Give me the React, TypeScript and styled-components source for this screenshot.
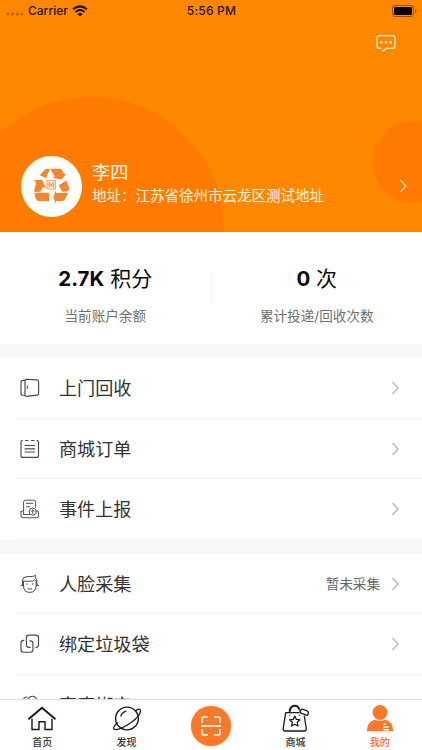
import React from 'react';
import styled, { createGlobalStyle } from 'styled-components';

const Global = createGlobalStyle`
  * { box-sizing: border-box; }
  html, body { margin: 0; padding: 0; }
  body {
    width: 422px;
    height: 750px;
    overflow: hidden;
    background: #fff;
    font-family: Inter, 'Noto Sans CJK SC', sans-serif;
    color: #333;
  }
  svg { display: block; flex: none; }
`;

const Screen = styled.div`
  width: 422px;
  height: 750px;
  display: flex;
  flex-direction: column;
  overflow: hidden;
`;

const Scroller = styled.main`
  flex: 1;
  min-height: 0;
  overflow: hidden;
  display: flex;
  flex-direction: column;
`;

const Header = styled.header`
  flex: none;
  height: 232px;
  background: #ff8800;
  position: relative;
  overflow: hidden;
  display: flex;
  flex-direction: column;
`;

const Bubble = styled.div<{ $x: number; $y: number; $r: number }>`
  position: absolute;
  left: ${p => p.$x - p.$r}px;
  top: ${p => p.$y - p.$r}px;
  width: ${p => p.$r * 2}px;
  height: ${p => p.$r * 2}px;
  border-radius: 50%;
  background: #ff7b00;
`;

const StatusBar = styled.div`
  position: relative;
  height: 21px;
  padding: 0 5px 0 6px;
  display: grid;
  grid-template-columns: 1fr auto 1fr;
  align-items: center;
  font-size: 12px;
  font-weight: 500;
  letter-spacing: 0.2px;
  color: #241300;
`;

const Carrier = styled.div`
  display: flex;
  align-items: center;
  gap: 4.5px;
  letter-spacing: 0;
`;

const SignalDots = styled.svg`
  margin-top: 7px;
`;

const Battery = styled.div`
  display: flex;
  justify-content: flex-end;
`;

const HeaderActions = styled.div`
  position: relative;
  display: flex;
  justify-content: flex-end;
  padding: 12.5px 26px 0 0;
`;

const Profile = styled.div`
  position: relative;
  display: flex;
  align-items: center;
  margin-top: auto;
  height: 62px;
  margin-bottom: 15px;
  padding: 0 13px 0 20.5px;
`;

const Avatar = styled.div`
  width: 61px;
  height: 61px;
  border-radius: 50%;
  background: #fff;
  display: flex;
  align-items: center;
  justify-content: center;
`;

const Person = styled.div`
  flex: 1;
  margin-left: 10.5px;
  color: #fff6e6;
`;

const Name = styled.div`
  font-size: 18.2px;
  line-height: 26px;
  margin-top: -6px;
`;

const Address = styled.div`
  font-size: 14.5px;
  line-height: 22px;
  white-space: nowrap;
`;

const Stats = styled.section`
  flex: none;
  height: 112px;
  display: flex;
  align-items: flex-start;
  background: #fff;
`;

const Stat = styled.div`
  flex: 1;
  padding-top: 32px;
  text-align: center;
`;

const StatDivider = styled.div`
  width: 1px;
  height: 32px;
  margin-top: 40px;
  background: #f4f4f4;
`;

const StatValue = styled.div`
  font-size: 21px;
  line-height: 30px;
  color: #0a0a0a;
  b { font-weight: 700; font-size: 20.5px; }
`;

const StatLabel = styled.div`
  margin-top: 12px;
  font-size: 13.6px;
  line-height: 20px;
  color: #707070;
`;

const Gap = styled.div`
  flex: none;
  height: 14px;
  background: #f8f7f6;
`;

const Group = styled.section`
  flex: none;
  background: #fff;
`;

const Row = styled.div`
  height: 60.5px;
  display: flex;
  align-items: center;
  padding: 0 21px 0 20px;
  background: linear-gradient(#f5f5f5, #f5f5f5) 16px 100% / 100% 1px no-repeat;
`;

const RowTitle = styled.div`
  flex: 1;
  margin-left: 19px;
  font-size: 18.1px;
  line-height: 26px;
  color: #333;
`;

const RowNote = styled.div`
  font-size: 13.6px;
  line-height: 20px;
  color: #666;
  margin-right: 9px;
`;

const TabBar = styled.nav`
  flex: none;
  height: 51px;
  border-top: 1px solid #dedede;
  background: #fff;
  display: grid;
  grid-template-columns: repeat(5, 1fr);
`;

const Tab = styled.div<{ $active?: boolean }>`
  display: flex;
  flex-direction: column;
  align-items: center;
  padding-top: 4px;
  font-size: 10px;
  line-height: 14px;
  font-weight: 500;
  color: ${p => (p.$active ? '#f9663b' : '#333')};
`;

const TabLabel = styled.span`
  margin-top: 1px;
`;

const ScanButton = styled.div`
  width: 40px;
  height: 40px;
  margin-top: 2px;
  border-radius: 50%;
  background: #fb7829;
  box-shadow: 0 0 2px rgba(251, 120, 41, 0.5);
  display: flex;
  align-items: center;
  justify-content: center;
`;

const Chevron = ({ color = '#c0c0c2', width = 1.7 }: { color?: string; width?: number }) => (
  <svg width="12" height="14" viewBox="0 0 12 14" fill="none" stroke={color} strokeWidth={width}>
    <path d="M3.5 1.2 9 7 3.5 12.8" />
  </svg>
);

const LineIcon = ({ children }: { children: React.ReactNode }) => (
  <svg width="20" height="20" viewBox="0 0 20 20" fill="none" stroke="#484848" strokeWidth="1.15" strokeLinecap="round" strokeLinejoin="round">
    {children}
  </svg>
);

const DoorIcon = () => (
  <LineIcon>
    <path d="M6.4 1.2 16.9 1.9Q18.6 2.1 18.6 3.6V15.4Q18.6 17 17 17.1L6.4 18.4Q5 18.5 5 17V2.6Q5 1.2 6.4 1.2" />
    <path d="M4.8 2.4H3Q1 2.4 1 4.4V15.4Q1 17.2 3 17.2H4.8M7.4 8.3V10.2" />
  </LineIcon>
);

const OrderIcon = () => (
  <LineIcon>
    <path d="M2.5 1.5Q1 1.5 1 3.4V16.4Q1 18.4 3 18.4H16.5Q18.5 18.4 18.5 16.4V3.4Q18.5 1.5 17 1.5M5.4 1.5H8M11.4 1.5H14M5 6.5H14.6M5 9.8H14.6M5 13H14.6" />
  </LineIcon>
);

const ReportIcon = () => (
  <LineIcon>
    <g strokeWidth="0.95">
      <path d="M3.6 15.3V3Q3.6 1.2 5.4 1.2H13.8Q15.6 1.2 15.6 3V8.4M6.3 4.3H13M6.3 7.7H9.8M1 12.7V17Q1 18.7 2.8 18.7H16.7Q18.5 18.7 18.5 17V12.7L16.8 11.8M1 12.7 3.5 11.5M3.8 15.5H10" />
      <circle cx="12.8" cy="12.6" r="3.6" />
      <path d="M12.8 14.6V11M11.4 12.2 12.8 10.8 14.2 12.2" />
    </g>
  </LineIcon>
);

const FaceIcon = () => (
  <LineIcon>
    <g strokeWidth="1">
      <path d="M2.6 11.5V6.4Q2.6 3 6 2.8L12.6 2.4Q14.6 2.2 15.6 1.1Q16 2.8 15.3 4Q16.9 5 16.9 7V11.5" />
      <path d="M2.8 7.2H12.8L14.4 5.7 16.6 7.6M1 11.3H3.4M16.2 11.3H18.6M3.5 8V12Q3.7 18.4 9.8 18.4Q15.9 18.4 16.1 12V8" />
      <path d="M8 14.8Q9.8 15.7 11.6 14.8" />
      <path d="M7 9.9V10M12.7 9.9V10" strokeWidth="1.5" />
    </g>
  </LineIcon>
);

const BagIcon = () => (
  <LineIcon>
    <path d="M3.8 6.3Q1 6.3 1 8.9V15.6Q1 18.2 3.6 18.2H10.4Q13 18.2 13 15.6V9.4Q13 6.8 10.3 6.8H9.8M15.9 13.5Q18.5 13.3 18.5 10.8V3.7Q18.5 1.1 15.9 1.1H9Q6.4 1.1 6.4 3.7V10.7Q6.4 13.3 9 13.3H10.2" />
  </LineIcon>
);

const FamilyIcon = () => (
  <LineIcon>
    <path d="M8 7.5A4.6 4.6 0 1 1 16.6 7.5M5 8Q1.7 2.2 7 2M1 18Q1 10 8 10H13Q18 11 18.5 18" />
  </LineIcon>
);

const RecycleLogo = () => (
  <svg width="40" height="38" viewBox="0 0 42 41" fill="#f7852b">
    <path d="M9 9 14.4 2.6Q16.3 1.3 19.8 2L15.7 12.2Z" />
    <path d="M21 2H30.2Q32.4 2 33.4 4.2L35 7.5 37.6 7.2 32.2 13.6 22.2 11.7 25 10.4 20.7 2.7Z" />
    <path d="M2.4 14.2 11.2 13.7 15.5 22.3 12.4 21.7 9.6 26.6 3.3 27 3 25.1 4.9 17Z" />
    <path d="M3.2 28.4 4.2 33.3Q5.4 37 9 37H19V27.9H3.2Z" />
    <path d="M29.3 19.6 37.4 14.5 40.3 21.5Q41.4 24.2 39.5 26.2L33.1 26.7Z" />
    <path d="M23.5 32.1 26.4 24.8V28H39.5L36.3 34.5Q35.4 36.6 32.5 36.6H26.4L26.2 40Z" />
    <g fill="none" stroke="#f49a58" strokeWidth="1.2">
      <path d="M16.7 14.8H25.6V23.8H16.7ZM18.3 16.4 24 22.2M24 16.4 18.3 22.2M18.8 17.8V20.8M23.6 17.8V20.8" />
    </g>
  </svg>
);

const WifiIcon = () => (
  <svg width="16" height="12" viewBox="0 0 16 12" fill="none" stroke="#1b0e00" strokeWidth="2">
    <path d="M1 4.3Q8-1.6 15 4.3M3.5 6.9Q8 3.2 12.5 6.9" />
    <path d="M8 11.6 5.4 9Q8 7 10.6 9Z" fill="#1b0e00" stroke="none" />
  </svg>
);

const services = [
  { title: '上门回收', Icon: DoorIcon },
  { title: '商城订单', Icon: OrderIcon },
  { title: '事件上报', Icon: ReportIcon },
];

const bindings = [
  { title: '人脸采集', Icon: FaceIcon, note: '暂未采集' },
  { title: '绑定垃圾袋', Icon: BagIcon },
  { title: '家庭绑定', Icon: FamilyIcon },
];

const MenuRow = ({ title, Icon, note }: { title: string; Icon: React.FC; note?: string }) => (
  <Row>
    <Icon />
    <RowTitle>{title}</RowTitle>
    {note && <RowNote>{note}</RowNote>}
    <Chevron />
  </Row>
);

export default function App() {
  return (
    <>
      <Global />
      <Screen>
        <Scroller>
          <Header>
            <Bubble $x={91} $y={230} $r={133} />
            <Bubble $x={414} $y={162} $r={40.7} />
            <StatusBar>
              <Carrier>
                <SignalDots width="17.5" height="4" viewBox="0 0 17.5 4" fill="#b96709">
                  <circle cx="2" cy="2" r="1.6" />
                  <circle cx="6.6" cy="2" r="1.6" />
                  <circle cx="11.2" cy="2" r="1.6" />
                  <circle cx="15.8" cy="2" r="1.6" />
                </SignalDots>
                Carrier
                <WifiIcon />
              </Carrier>
              <span>5:56 PM</span>
              <Battery>
                <svg width="25" height="12" viewBox="0 0 25 12">
                  <rect x="0.5" y="0.5" width="21" height="11" rx="2.5" fill="none" stroke="#955000" />
                  <rect x="2" y="2" width="18" height="8" rx="1.3" fill="#000" />
                  <path d="M23 4Q24.6 5 24.6 6T23 8Z" fill="#955000" />
                </svg>
              </Battery>
            </StatusBar>
            <HeaderActions>
              <svg width="20" height="18" viewBox="0 0 20 18" fill="none" stroke="#fff0d5" strokeWidth="1.2" strokeLinecap="round">
                <path d="M4.8 14.4H3.5Q1 14.4 1 12V4Q1 1.6 3.5 1.6H16.5Q19 1.6 19 4V12Q19 14.4 16.5 14.4H10.3L6.8 17.1" />
                <path d="M5.5 8.3V8.4M10 8.3V8.4M14.5 8.3V8.4" strokeWidth="2.5" />
              </svg>
            </HeaderActions>
            <Profile>
              <Avatar><RecycleLogo /></Avatar>
              <Person>
                <Name>李四</Name>
                <Address>地址：江苏省徐州市云龙区测试地址</Address>
              </Person>
              <Chevron color="#fff0dc" width={1.1} />
            </Profile>
          </Header>
          <Stats>
            <Stat>
              <StatValue><b>2.7K</b> 积分</StatValue>
              <StatLabel>当前账户余额</StatLabel>
            </Stat>
            <StatDivider />
            <Stat>
              <StatValue><b>0</b> 次</StatValue>
              <StatLabel>累计投递/回收次数</StatLabel>
            </Stat>
          </Stats>
          <Gap />
          <Group>{services.map(s => <MenuRow key={s.title} {...s} />)}</Group>
          <Gap />
          <Group>{bindings.map(b => <MenuRow key={b.title} {...b} />)}</Group>
        </Scroller>
        <TabBar>
          <Tab>
            <svg width="30" height="30" viewBox="0 0 30 30" fill="none" stroke="#1c1817" strokeWidth="1.4">
              <path d="M1.5 15.2 15 3.8 28.5 15.2" strokeWidth="2" />
              <path d="M5 14.8V25.5H12V17.8H18V25.5H25V14.8" />
            </svg>
            <TabLabel>首页</TabLabel>
          </Tab>
          <Tab>
            <svg width="30" height="30" viewBox="0 0 30 30" fill="none" stroke="#1c1817" strokeWidth="1.4">
              <circle cx="15" cy="14.5" r="11.4" />
              <path d="M23.5 6.8Q28 3.8 28.5 6.5Q29 11.5 18.5 19Q5.5 27.5 2 25Q.3 23.5 5.6 18.2M8.7 12.5Q10 8.3 14.2 7.2" strokeWidth="1.3" />
            </svg>
            <TabLabel>发现</TabLabel>
          </Tab>
          <Tab>
            <ScanButton>
              <svg width="20" height="20" viewBox="0 0 20 20" fill="none" stroke="#ffead4" strokeWidth="1.9">
                <path d="M1 7V3Q1 1 3 1H7M13 1H17Q19 1 19 3V7M1 13V17Q1 19 3 19H7M13 19H17Q19 19 19 17V13M0 10H20" />
              </svg>
            </ScanButton>
          </Tab>
          <Tab>
            <svg width="30" height="30" viewBox="0 0 30 30" fill="none" stroke="#1c1817" strokeWidth="1.3" strokeLinejoin="round">
              <path d="M19.5 8.7H5.7L3.3 24Q2.8 27 5.5 27H24Q26.7 27 26.2 24L24.2 11.5" />
              <path d="M9.6 7.8Q10.3 1.7 14.8 1.7Q18.4 1.7 19.5 5.8" strokeWidth="2" />
              <path d="M19.8 7 22.2 5 27.5 7.2Q29.3 8.8 27.3 11.4L20.9 9.1Z" />
              <path d="M14.8 12 16.3 15.3 20 15.8 17.3 18.3 18 22 14.8 20.2 11.6 22 12.3 18.3 9.6 15.8 13.3 15.3Z" />
              <path d="M9.7 10.8V11.8M19.4 10.8V11.8" />
            </svg>
            <TabLabel>商城</TabLabel>
          </Tab>
          <Tab $active>
            <svg width="30" height="30" viewBox="0 0 30 30" fill="#fb7829">
              <circle cx="15" cy="8.5" r="7.4" />
              <path d="M1.8 27.3Q2.2 18 9.5 15.8Q15 18 20.5 15.8Q27.8 18 28.2 27.3Z" />
              <path d="M18.4 20.2H21M18.4 23H24M18.4 25.8H24" stroke="#fff3df" strokeWidth="1.4" />
            </svg>
            <TabLabel>我的</TabLabel>
          </Tab>
        </TabBar>
      </Screen>
    </>
  );
}
